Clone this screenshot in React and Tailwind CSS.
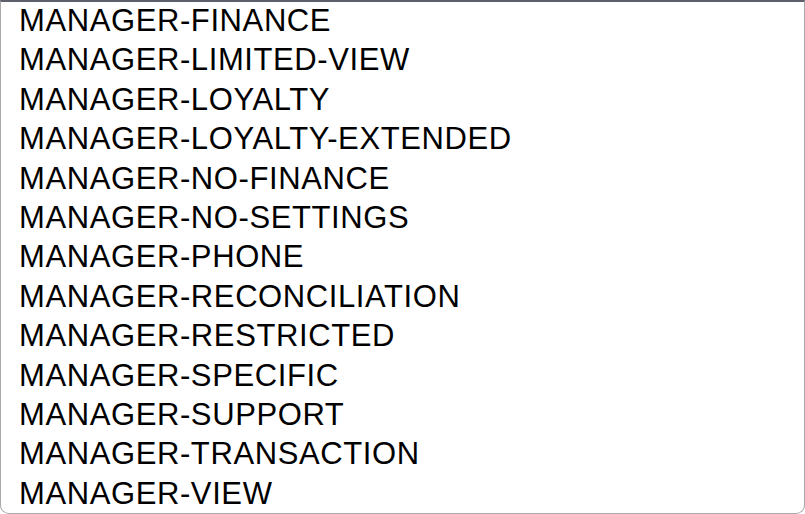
import React from 'react';

const roles = [
  'MANAGER-FINANCE',
  'MANAGER-LIMITED-VIEW',
  'MANAGER-LOYALTY',
  'MANAGER-LOYALTY-EXTENDED',
  'MANAGER-NO-FINANCE',
  'MANAGER-NO-SETTINGS',
  'MANAGER-PHONE',
  'MANAGER-RECONCILIATION',
  'MANAGER-RESTRICTED',
  'MANAGER-SPECIFIC',
  'MANAGER-SUPPORT',
  'MANAGER-TRANSACTION',
  'MANAGER-VIEW',
];

const App = () => {
  return (
    <div className="w-[805px] h-[514px] bg-white overflow-hidden">
      {/* role picker list */}
      <div className="h-[514px] border-t-2 border-t-[#5d5f6b] border-x border-b border-x-[#a9a9a9] border-b-[#a9a9a9] rounded-b-[9px] bg-white overflow-hidden">
        <ul className="-mt-[1px] pl-[18px]">
          {roles.map((role) => (
            <li
              key={role}
              className="h-[39.4px] leading-[39.4px] text-[31px] text-black tracking-[0.6px] whitespace-nowrap"
              style={{ fontFamily: '"Liberation Sans", Arial, sans-serif' }}
            >
              {role}
            </li>
          ))}
        </ul>
      </div>
    </div>
  );
};

export default App;
